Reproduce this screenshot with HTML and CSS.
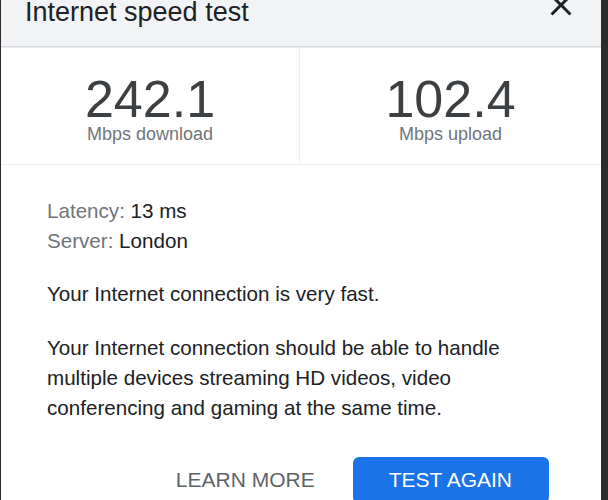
FILE: index.html
```html
<!DOCTYPE html>
<html lang="en">
<head>
<meta charset="utf-8">
<title>Internet speed test</title>
<link rel="stylesheet" href="styles.css">
</head>
<body>
<div class="dialog">
  <div class="header">
    <h1 class="title">Internet speed test</h1>
    <svg class="close" width="36" height="36" viewBox="0 0 24 24" aria-label="Close">
      <path fill="currentColor" d="M19 6.41L17.59 5 12 10.59 6.41 5 5 6.41 10.59 12 5 17.59 6.41 19 12 13.41 17.59 19 19 17.59 13.41 12z"/>
    </svg>
  </div>
  <div class="stats">
    <div class="stat stat-left">
      <div class="value">242.1</div>
      <div class="unit">Mbps download</div>
    </div>
    <div class="stat">
      <div class="value">102.4</div>
      <div class="unit">Mbps upload</div>
    </div>
  </div>
  <div class="content">
    <div class="meta">
      <div><span class="label">Latency:</span> 13 ms</div>
      <div><span class="label">Server:</span> London</div>
    </div>
    <p class="summary">Your Internet connection is very fast.</p>
    <p class="detail">Your Internet connection should be able to handle multiple devices streaming HD videos, video conferencing and gaming at the same time.</p>
    <div class="actions">
      <button class="btn btn-text">LEARN MORE</button>
      <button class="btn btn-primary">TEST AGAIN</button>
    </div>
  </div>
</div>
</body>
</html>
```
FILE: styles.css
```css
html, body {
  margin: 0;
  padding: 0;
  height: 100%;
}
body {
  background: #2b2b2b;
  overflow: hidden;
  font-family: "Liberation Sans", Arial, sans-serif;
}
.dialog {
  margin-left: 1px;
  width: 600px;
  min-height: 520px;
  background: #ffffff;
}
.header {
  height: 47px;
  background: #f1f3f4;
  border-bottom: 1px solid #d6d8db;
  box-shadow: 0 1px 0 #ebecee;
  display: flex;
  justify-content: space-between;
  align-items: flex-start;
  padding-left: 24px;
  box-sizing: border-box;
  overflow: visible;
}
.title {
  margin: -3px 0 0 0;
  font-size: 27px;
  line-height: 31px;
  font-weight: normal;
  color: #202124;
}
.close {
  margin-top: -13px;
  margin-right: 22px;
  color: #202124;
}
.stats {
  margin-top: 1px;
  display: grid;
  grid-template-columns: 299px 1fr;
  border-bottom: 1px solid #eeeeee;
}
.stat {
  text-align: center;
  padding: 25px 0 22px;
}
.stat-left {
  border-right: 1px solid #eeeeee;
}
.value {
  font-size: 52px;
  line-height: 52px;
  color: #3c4043;
}
.unit {
  margin-top: 1px;
  font-size: 18px;
  line-height: 16px;
  color: #70757a;
}
.content {
  padding: 31px 52px 0 46px;
  font-size: 20.6px;
  line-height: 30px;
  color: #202124;
}
.label {
  color: #70757a;
}
.summary {
  margin: 23px 0 0;
}
.detail {
  margin: 24px 0 0;
}
.actions {
  margin-top: 34px;
  display: flex;
  justify-content: flex-end;
  gap: 2px;
}
.btn {
  font-family: "Liberation Sans", Arial, sans-serif;
  font-size: 21px;
  height: 46px;
  line-height: 46px;
  padding: 0 36px;
  border: none;
  border-radius: 6px;
  background: transparent;
}
.btn-text {
  color: #5f6368;
}
.btn-primary {
  background: #1a73e8;
  color: #ffffff;
  padding: 0 37px 0 36px;
}
```
